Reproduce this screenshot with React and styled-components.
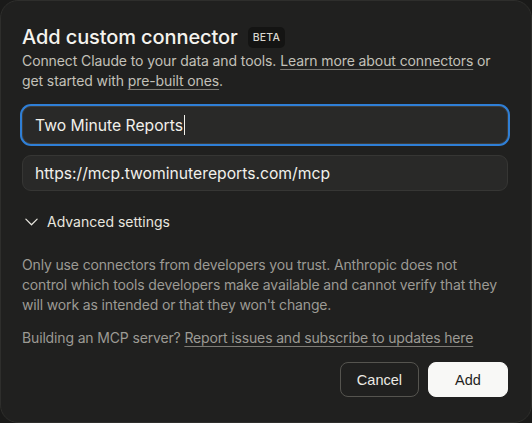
import React from 'react'
import styled, { createGlobalStyle } from 'styled-components'

const Global = createGlobalStyle`
  html, body {
    margin: 0;
    padding: 0;
    background: #1a1a19;
  }
  * { box-sizing: border-box; }
`

const App = () => {
  return (
    <>
      <Global />
      <Dialog>
        <Header>
          <Title>Add custom connector</Title>
          <Badge>BETA</Badge>
        </Header>
        <Intro>
          Connect Claude to your data and tools. <Link>Learn more about connectors</Link> or
          get started with <Link>pre-built ones</Link>.
        </Intro>

        <Fields>
          <Field $focused>
            Two Minute Reports<Caret />
          </Field>
          <Field>https://mcp.twominutereports.com/mcp</Field>
        </Fields>

        <Toggle>
          <svg width="15" height="15" viewBox="0 0 16 16" fill="none">
            <path d="M2 5.5L8 11.5L14 5.5" stroke="#e8e6df" strokeWidth="1.3" strokeLinecap="round" strokeLinejoin="round" />
          </svg>
          Advanced settings
        </Toggle>

        <Note>
          Only use connectors from developers you trust. Anthropic does not control which tools
          developers make available and cannot verify that they will work as intended or that
          they won't change.
        </Note>
        <Note>
          Building an MCP server? <Link>Report issues and subscribe to updates here</Link>
        </Note>

        <Actions>
          <Button>Cancel</Button>
          <Button $primary>Add</Button>
        </Actions>
      </Dialog>
    </>
  )
}

const Dialog = styled.div`
  width: 532px;
  height: 423px;
  background: #20201f;
  border: 1px solid #2e2e2c;
  border-radius: 18px;
  padding: 24px 23px 0 21px;
  font-family: Inter, "Noto Sans", sans-serif;
  color: #c3c1b9;
`

const Header = styled.div`
  display: flex;
  align-items: center;
  gap: 10px;
`

const Title = styled.h1`
  margin: 0;
  font-size: 20px;
  font-weight: 500;
  color: #f4f3ee;
  letter-spacing: -0.1px;
`

const Badge = styled.span`
  background: #141413;
  color: #d8d6cf;
  font-size: 10.5px;
  font-weight: 500;
  padding: 4px 5px;
  border-radius: 5px;
  letter-spacing: 0.2px;
`

const Intro = styled.p`
  margin: 2px 0 0;
  font-size: 14px;
  line-height: 20px;
  letter-spacing: -0.1px;
  color: #c3c1b9;
`

const Link = styled.span`
  text-decoration: underline;
  text-decoration-color: #7d7b75;
  text-underline-offset: 3px;
  text-decoration-thickness: 1px;
`

const Fields = styled.div`
  display: flex;
  flex-direction: column;
  gap: 11px;
  margin-top: 15px;
`

const Field = styled.div`
  height: ${p => (p.$focused ? '38px' : '36px')};
  display: flex;
  align-items: center;
  padding: 0 12px;
  border-radius: 9px;
  background: #292928;
  border: 1px solid ${p => (p.$focused ? '#3d3d3b' : '#363634')};
  box-shadow: ${p => (p.$focused ? '0 0 0 2px #2f7fd6' : 'none')};
  font-size: 15.7px;
  color: #f1f0eb;
`

const Caret = styled.span`
  display: inline-block;
  width: 1px;
  height: 20px;
  background: #f1f0eb;
  margin-left: 1px;
`

const Toggle = styled.div`
  display: flex;
  align-items: center;
  gap: 8px;
  margin-top: 22px;
  padding-left: 2px;
  font-size: 14px;
  color: #e8e6df;
`

const Note = styled.p`
  margin: 25px 0 0;
  max-width: 480px;
  font-size: 14px;
  line-height: 20px;
  letter-spacing: -0.15px;
  color: #9c9a94;

  & + & {
    margin-top: 13px;
  }
`

const Actions = styled.div`
  display: flex;
  justify-content: flex-end;
  gap: 9px;
  margin-top: 14px;
`

const Button = styled.button`
  height: 35px;
  padding: 0 16px;
  border-radius: 8px;
  font-family: "Liberation Sans", Arial, sans-serif;
  font-size: 14.5px;
  cursor: pointer;
  background: ${p => (p.$primary ? '#f8f8f6' : 'transparent')};
  color: ${p => (p.$primary ? '#1f1f1e' : '#eceae4')};
  border: 1px solid ${p => (p.$primary ? '#f8f8f6' : '#55544f')};
  min-width: ${p => (p.$primary ? '80px' : '79px')};
`

export default App
